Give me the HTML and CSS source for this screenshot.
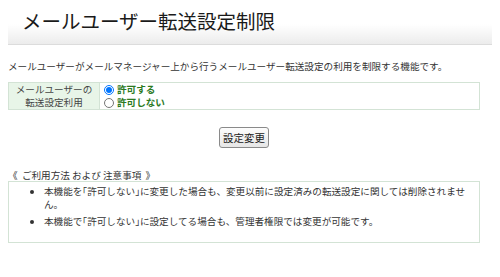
FILE: index.html
```html
<!DOCTYPE html>
<html lang="ja">
  <head>
    <meta charset="UTF-8" />
    <title>メールユーザー転送設定制限</title>
    <link rel="stylesheet" href="styles.css">
  </head>
  <body>
    <div class="page_head">
      <h1>メールユーザー転送設定制限</h1>
    </div>

    <p class="lead">メールユーザーがメールマネージャー上から行うメールユーザー転送設定の利用を制限する機能です。</p>

    <form class="setting">
      <table class="setting_table">
        <tr>
          <th>メールユーザーの<br>転送設定利用</th>
          <td>
            <label><input type="radio" name="allow" checked /> 許可する</label>
            <label><input type="radio" name="allow" /> 許可しない</label>
          </td>
        </tr>
      </table>
      <div class="btn_contain">
        <button type="button">設定変更</button>
      </div>
    </form>

    <p class="notes_title">《&nbsp; ご利用方法 および 注意事項 &nbsp;》</p>
    <div class="notes">
      <ul>
        <li>本機能を｢許可しない｣に変更した場合も、変更以前に設定済みの転送設定に関しては削除されません。</li>
        <li>本機能で｢許可しない｣に設定してる場合も、管理者権限では変更が可能です。</li>
      </ul>
    </div>
  </body>
</html>
```

FILE: styles.css
```css
* {
  padding: 0;
  margin: 0;
  box-sizing: border-box;
}

body {
  margin: 0 8px;
  background: #fff;
  color: #222;
  font-family: "Noto Sans CJK JP", "Noto Sans", sans-serif;
  font-size: 9.6px;
}

.page_head {
  height: 45px;
  padding: 6px 0 0 14px;
  background: linear-gradient(#fff 0%, #fff 55%, #ececec 100%);
  border-bottom: 1px solid #dcdcdc;
  margin-right: -3px;
}
.page_head h1 {
  font-size: 19.5px;
  font-weight: normal;
  line-height: 30px;
  color: #1a1a1a;
}

.lead {
  margin-top: 14px;
  line-height: 14px;
  color: #333;
}

.setting_table {
  width: 472px;
  margin-top: 9px;
  border-collapse: collapse;
  border: 1px solid #d3e3d5;
}
.setting_table th {
  width: 91px;
  background-color: #e8f5e8;
  font-weight: normal;
  color: #444;
  line-height: 13px;
  padding: 0;
  border-right: 1px solid #d3e3d5;
}
.setting_table td {
  padding: 0 4px;
  vertical-align: middle;
}
.setting_table label {
  display: flex;
  align-items: center;
  color: #2c7a1f;
  font-weight: bold;
  line-height: 13px;
}
.setting_table input[type="radio"] {
  width: 10px;
  height: 10px;
  margin: 0 3px 0 0;
}

.btn_contain {
  width: 472px;
  display: flex;
  justify-content: center;
  margin-top: 17px;
}
.btn_contain button {
  font-family: "Noto Sans CJK JP", sans-serif;
  font-size: 10.5px;
  padding: 2px 3px;
  line-height: 15px;
  color: #222;
  background: linear-gradient(#fdfdfd, #e6e6e6);
  border: 1px solid #8a8a8a;
  border-radius: 3px;
}

.notes_title {
  margin-top: 21px;
  line-height: 12px;
  color: #333;
}
.notes {
  width: 472px;
  border: 1px solid #d3e3d5;
  padding: 3px 8px 14px 0;
  margin-bottom: 20px;
}
.notes ul {
  padding-left: 35px;
  color: #333;
}
.notes li {
  line-height: 13px;
  margin-bottom: 4px;
}
.notes li:last-child {
  margin-bottom: 0;
}
```
